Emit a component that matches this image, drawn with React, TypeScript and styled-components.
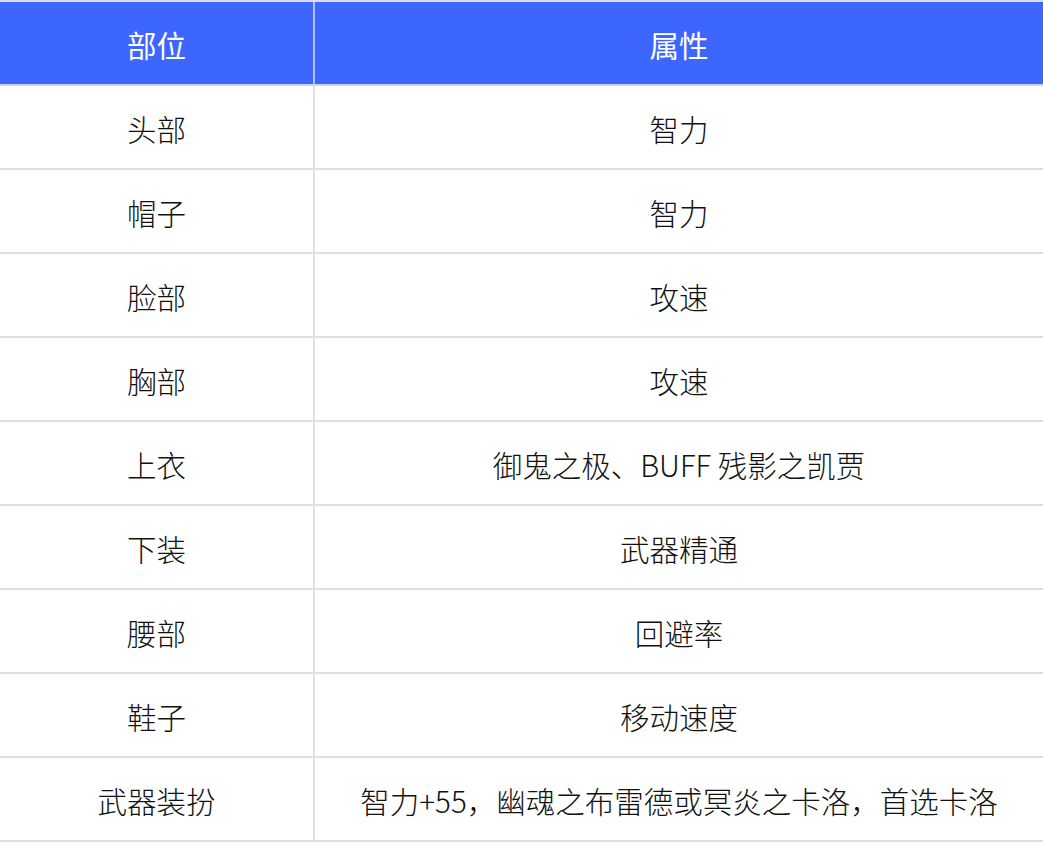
import React from 'react';
import styled, { createGlobalStyle } from 'styled-components';

const rows: [string, string][] = [
  ['头部', '智力'],
  ['帽子', '智力'],
  ['脸部', '攻速'],
  ['胸部', '攻速'],
  ['上衣', '御鬼之极、BUFF 残影之凯贾'],
  ['下装', '武器精通'],
  ['腰部', '回避率'],
  ['鞋子', '移动速度'],
  ['武器装扮', '智力+55，幽魂之布雷德或冥炎之卡洛，首选卡洛'],
];

const GlobalStyle = createGlobalStyle`
  html, body {
    margin: 0;
    padding: 0;
    background: #ffffff;
  }
  body {
    font-family: "Noto Sans CJK SC", "Noto Sans", sans-serif;
  }
`;

const Table = styled.div`
  width: 1043px;
  border-top: 2px solid #d9dde8;
`;

const Row = styled.div<{ $head?: boolean }>`
  display: grid;
  grid-template-columns: 315px 1fr;
  height: 82px;
  background: ${(p) => (p.$head ? '#3d66ff' : '#ffffff')};
  border-bottom: 2px solid ${(p) => (p.$head ? '#c9d3fb' : '#e0e0e0')};
`;

const Cell = styled.div<{ $head?: boolean; $first?: boolean }>`
  display: flex;
  align-items: center;
  justify-content: center;
  padding-top: 4px;
  font-size: 29.5px;
  font-weight: ${(p) => (p.$head ? 400 : 300)};
  line-height: 1;
  color: ${(p) => (p.$head ? '#ffffff' : '#111111')};
  border-right: ${(p) =>
    p.$first ? `2px solid ${p.$head ? '#b3c1ff' : '#e0e0e0'}` : 'none'};
  white-space: nowrap;
`;

export default function App() {
  return (
    <>
      <GlobalStyle />
      <Table>
        <Row $head>
          <Cell $head $first>部位</Cell>
          <Cell $head>属性</Cell>
        </Row>
        {rows.map(([part, attr]) => (
          <Row key={part}>
            <Cell $first>{part}</Cell>
            <Cell>{attr}</Cell>
          </Row>
        ))}
      </Table>
    </>
  );
}
